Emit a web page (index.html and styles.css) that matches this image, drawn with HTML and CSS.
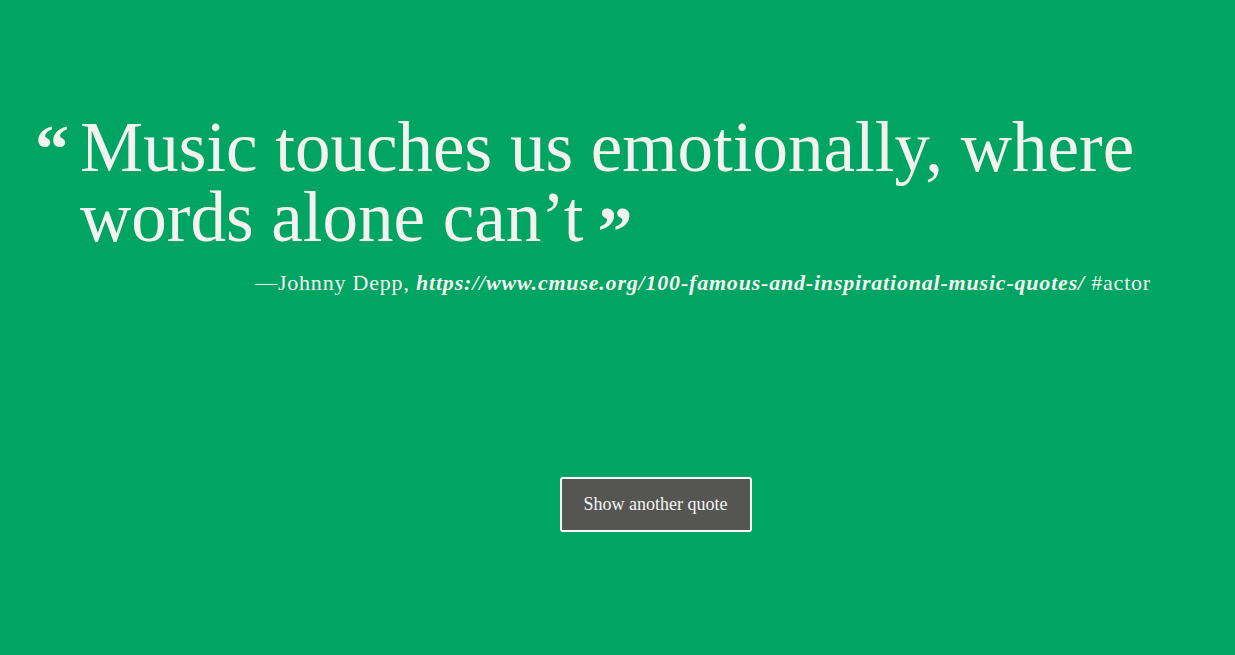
FILE: index.html
```html
<!DOCTYPE html>
<html>
<head>
<meta charset="utf-8">
<link rel="stylesheet" href="styles.css">
</head>
<body>
<main class="page">
  <section class="quote-box">
    <blockquote class="quote">
      <span class="mark-open">“</span>
      <p class="quote-text">Music touches us emotionally, where words alone can’t<span class="mark-close">”</span></p>
    </blockquote>
    <p class="author">—Johnny Depp, <cite class="source">https://www.cmuse.org/100-famous-and-inspirational-music-quotes/</cite> #actor</p>
  </section>
  <div class="actions">
    <button class="btn">Show another quote</button>
  </div>
</main>
</body>
</html>
```

FILE: styles.css
```css
html, body {
  margin: 0;
  padding: 0;
  height: 100%;
}
body {
  background: #00a463;
  color: #f3f2ee;
  font-family: "Liberation Serif", "Times New Roman", serif;
}
.page {
  padding: 112px 0 0 37px;
  box-sizing: border-box;
  height: 100%;
}
.quote-box {
  width: 1114px;
}
.quote {
  margin: 0;
  display: flex;
  align-items: flex-start;
}
.mark-open {
  font-weight: bold;
  font-size: 68px;
  line-height: 70px;
  width: 45px;
  flex: none;
  margin-top: 2px;
  margin-left: -2px;
}
.quote-text {
  margin: 0;
  font-size: 71px;
  line-height: 70px;
  width: 1072px;
}
.mark-close {
  font-weight: bold;
  font-size: 70px;
  margin-left: 14px;
  position: relative;
  top: 14px;
  line-height: 0;
}
.author {
  margin: 18px 0 0;
  text-align: right;
  font-size: 22px;
  letter-spacing: 0.8px;
}
.source {
  font-style: italic;
  font-weight: bold;
}
.actions {
  display: flex;
  justify-content: center;
  margin-top: 181px;
  padding-left: 39px;
}
.btn {
  background: #555553;
  color: #f5f5f5;
  border: 2px solid #fafafa;
  border-radius: 3px;
  width: 192px;
  height: 55px;
  font-family: "Liberation Serif", "Times New Roman", serif;
  font-size: 18px;
  cursor: pointer;
}
```
